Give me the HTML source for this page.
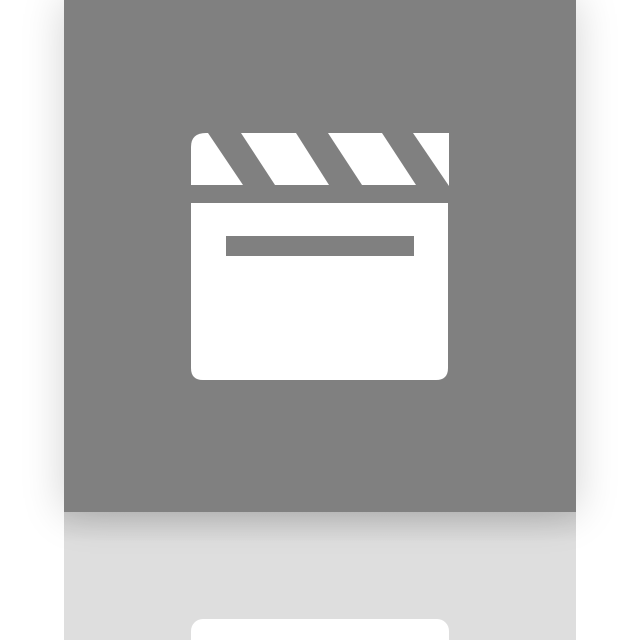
<!DOCTYPE html>
<html><head><style>
html,body{margin:0;padding:0;background:#fff;width:640px;height:640px;overflow:hidden;position:relative}
.sq{position:absolute;left:64px;top:0;width:512px;height:512px;background:#808080;box-shadow:0 0 40px rgba(0,0,0,0.18);z-index:2}
.ref{position:absolute;left:64px;top:512px;width:512px;height:128px;background:#dedede;z-index:1}
.ref:before{content:"";position:absolute;left:0;top:0;width:100%;height:30px;background:linear-gradient(#cbcbcb,#dedede)}
.rr{position:absolute;left:127px;top:107px;width:258px;height:40px;background:#fff;border-radius:12px}
svg{position:absolute;left:0;top:0}
</style></head><body>
<div class="sq">
<svg width="512" height="512" viewBox="64 0 512 512">
<path fill="#fff" d="M191 147 Q191 133 206 133 L208 133 L243 185 L191 185 Z"/>
<path fill="#fff" d="M241 133 L296 133 L329 185 L275 185 Z"/>
<path fill="#fff" d="M328 133 L382 133 L416 185 L362 185 Z"/>
<path fill="#fff" d="M413 133 L449 133 L449 186 Z"/>
<path fill="#fff" fill-rule="evenodd" d="M191 203 L448 203 L448 368 Q448 380 436 380 L203 380 Q191 380 191 368 Z M226 236 L414 236 L414 256 L226 256 Z"/>
</svg>
</div>
<div class="ref"><div class="rr"></div></div>
</body></html>
